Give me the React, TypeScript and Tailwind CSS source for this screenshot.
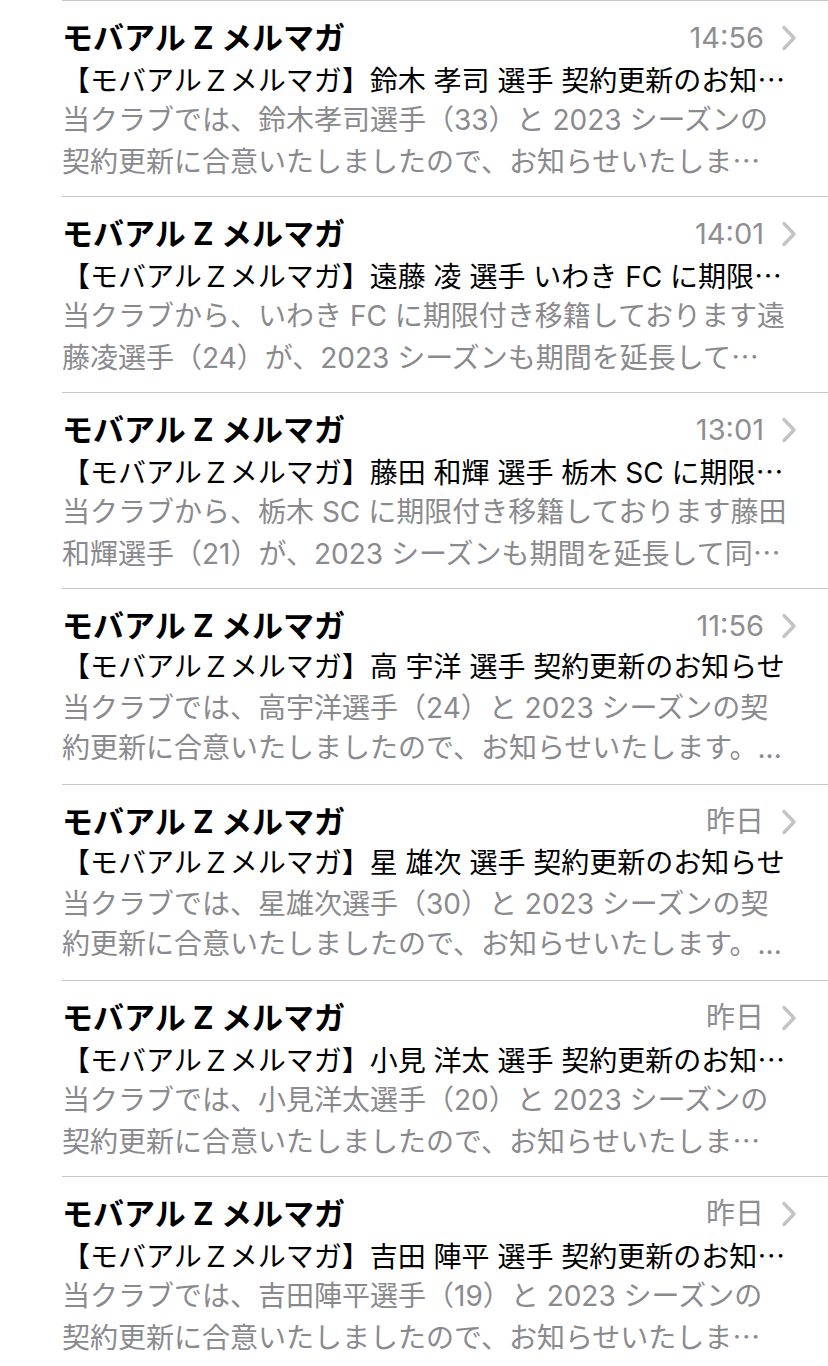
import React from 'react';

type Mail = {
  time: string;
  subject: string;
  cut: boolean;
  lines: [string, string];
  tail: string;
};

const mails: Mail[] = [
  {
    time: '14:56',
    subject: '【モバアルＺメルマガ】鈴木 孝司 選手 契約更新のお知',
    cut: true,
    lines: ['当クラブでは、鈴木孝司選手（33）と 2023 シーズンの', '契約更新に合意いたしましたので、お知らせいたしま'],
    tail: '…',
  },
  {
    time: '14:01',
    subject: '【モバアルＺメルマガ】遠藤 凌 選手 いわき FC に期限',
    cut: true,
    lines: ['当クラブから、いわき FC に期限付き移籍しております遠', '藤凌選手（24）が、2023 シーズンも期間を延長して'],
    tail: '…',
  },
  {
    time: '13:01',
    subject: '【モバアルＺメルマガ】藤田 和輝 選手 栃木 SC に期限',
    cut: true,
    lines: ['当クラブから、栃木 SC に期限付き移籍しております藤田', '和輝選手（21）が、2023 シーズンも期間を延長して同'],
    tail: '…',
  },
  {
    time: '11:56',
    subject: '【モバアルＺメルマガ】高 宇洋 選手 契約更新のお知らせ',
    cut: false,
    lines: ['当クラブでは、高宇洋選手（24）と 2023 シーズンの契', '約更新に合意いたしましたので、お知らせいたします。'],
    tail: '...',
  },
  {
    time: '昨日',
    subject: '【モバアルＺメルマガ】星 雄次 選手 契約更新のお知らせ',
    cut: false,
    lines: ['当クラブでは、星雄次選手（30）と 2023 シーズンの契', '約更新に合意いたしましたので、お知らせいたします。'],
    tail: '...',
  },
  {
    time: '昨日',
    subject: '【モバアルＺメルマガ】小見 洋太 選手 契約更新のお知',
    cut: true,
    lines: ['当クラブでは、小見洋太選手（20）と 2023 シーズンの', '契約更新に合意いたしましたので、お知らせいたしま'],
    tail: '…',
  },
  {
    time: '昨日',
    subject: '【モバアルＺメルマガ】吉田 陣平 選手 契約更新のお知',
    cut: true,
    lines: ['当クラブでは、吉田陣平選手（19）と 2023 シーズンの', '契約更新に合意いたしましたので、お知らせいたしま'],
    tail: '…',
  },
];

const Chevron = () => (
  <svg width="16" height="26" viewBox="0 0 16 26" className="ml-[17px] shrink-0">
    <path d="M3 2.5 L13 13 L3 23.5" fill="none" stroke="#c4c4c7" strokeWidth="3.4" strokeLinecap="round" strokeLinejoin="round" />
  </svg>
);

const Row = ({ mail }: { mail: Mail }) => (
  <div className="h-[196px] border-t border-[#c8c7cc] pt-[17px] pr-[31px]">
    <div className="flex items-center h-[40px]">
      <div className="flex-1 text-[31px] font-bold text-black leading-[40px] whitespace-nowrap">モバアル Z メルマガ</div>
      <div className="text-[29px] text-[#8e8e93] leading-[40px]">{mail.time}</div>
      <Chevron />
    </div>
    <div className="h-[42px] text-[28px] leading-[42px] text-black whitespace-nowrap overflow-hidden">
      {mail.subject}
      {mail.cut && <span className="font-['Noto_Sans_CJK_JP']">…</span>}
    </div>
    <div className="h-[40px] text-[28px] leading-[40px] text-[#8a8a8e] whitespace-nowrap overflow-hidden">{mail.lines[0]}</div>
    <div className="h-[40px] text-[28px] leading-[40px] text-[#8a8a8e] whitespace-nowrap overflow-hidden">
      {mail.lines[1]}
      <span className={mail.tail === '…' ? "font-['Noto_Sans_CJK_JP']" : ''}>{mail.tail}</span>
    </div>
  </div>
);

export default function App() {
  return (
    <div className="w-[828px] h-[1366px] overflow-hidden bg-white pl-[62px] font-['Inter','Noto_Sans_CJK_JP',sans-serif]">
      {mails.map((m, i) => (
        <Row key={i} mail={m} />
      ))}
    </div>
  );
}
